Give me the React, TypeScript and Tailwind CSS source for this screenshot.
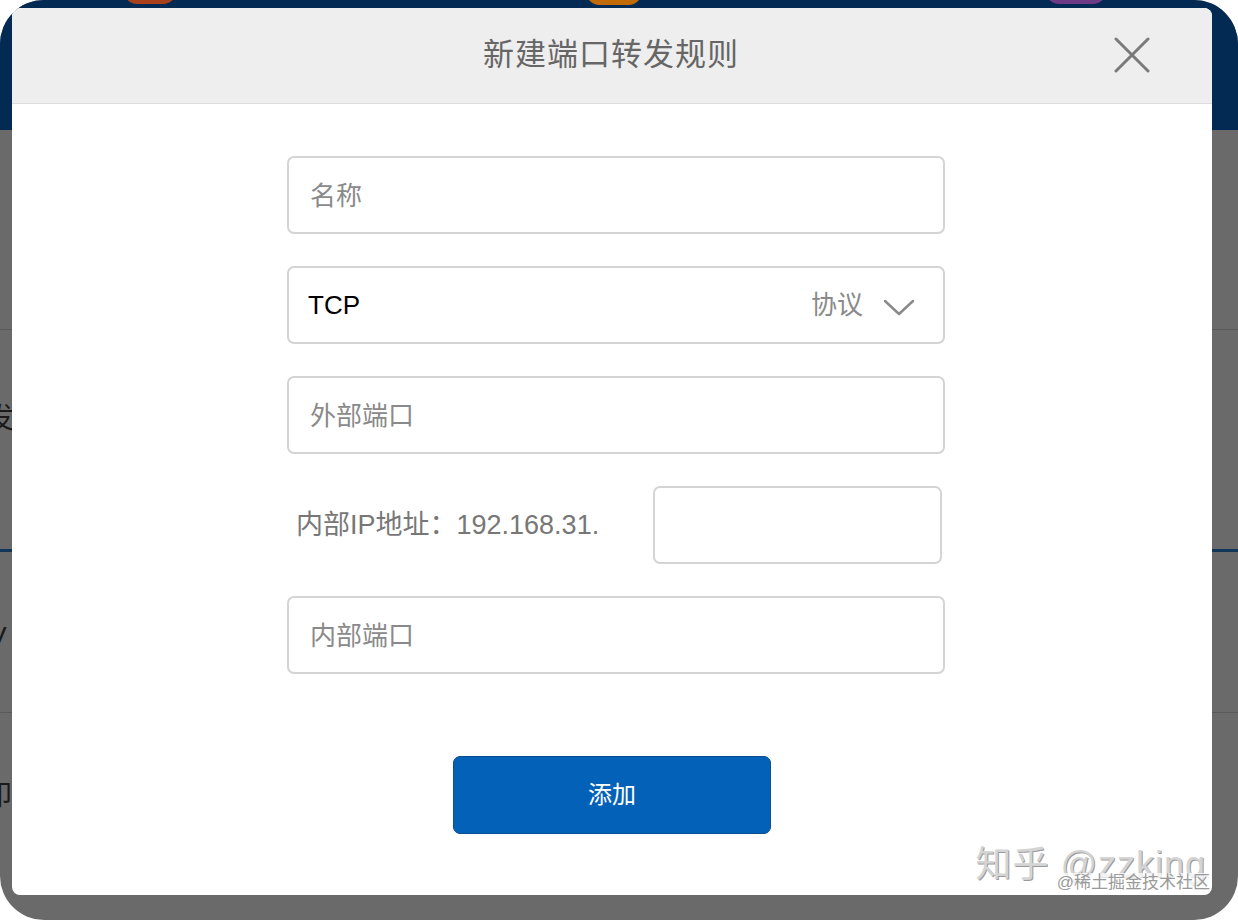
import React from "react";

const font = { fontFamily: '"Liberation Sans", "Noto Sans CJK SC", sans-serif' };

function Field({ placeholder }: { placeholder: string }) {
  return (
    <div className="w-[658px] h-[78px] rounded-[7px] border-2 border-[#d4d4d4] bg-white flex items-center pl-[21px] pt-[2px] text-[26px] text-[#8a8a8a]">
      {placeholder}
    </div>
  );
}

export default function App() {
  return (
    <div className="w-[1238px] h-[920px] bg-white" style={font}>
      <div className="relative w-full h-full rounded-[44px] overflow-hidden bg-[#6a6a6a]">
        {/* background page (dimmed) */}
        <div className="h-[130px] bg-[#022a52] flex items-start">
          <div className="ml-[124px] -mt-[22px] w-[52px] h-[26px] rounded-full bg-[#a8401c]" />
          <div className="ml-[410px] -mt-[22px] w-[56px] h-[27px] rounded-full bg-[#c06a08]" />
          <div className="ml-[404px] -mt-[22px] w-[60px] h-[26px] rounded-full bg-[#6e3a86]" />
        </div>
        <div className="h-[200px] border-b border-[#5a5a5a]" />
        <div className="h-[219px] flex items-start pt-[68px] -ml-[14px] text-[28px] text-[#1a1a1a]">发</div>
        <div className="h-[3px] bg-[#12355a]" />
        <div className="h-[161px] border-b border-[#5a5a5a] flex items-center -ml-[12px] pt-[10px] text-[28px] text-[#1a1a1a]">V</div>
        <div className="h-[160px] flex items-center -ml-[16px] pt-[6px] text-[28px] text-[#1a1a1a]">印</div>

        {/* modal */}
        <div className="absolute left-[12px] top-[8px] w-[1200px] h-[887px] bg-white rounded-[8px] overflow-hidden flex flex-col">
          <div className="h-[96px] bg-[#eeeeee] border-b border-[#dcdcdc] flex items-center justify-center relative shrink-0">
            <span className="text-[31px] text-[#666666] tracking-[1px] ml-[-2px]">新建端口转发规则</span>
            <svg className="absolute left-[1102px] top-[29px]" width="36" height="36" viewBox="0 0 36 36">
              <path d="M2 2 L34 34 M34 2 L2 34" stroke="#7a7a7a" strokeWidth="3" strokeLinecap="round" />
            </svg>
          </div>

          <div className="pl-[275px] pt-[52px] flex flex-col gap-[32px]">
            <Field placeholder="名称" />
            <div className="w-[658px] h-[78px] rounded-[7px] border-2 border-[#d4d4d4] bg-white flex items-center pl-[19px] pr-[28px]">
              <span className="text-[26px] text-black flex-1">TCP</span>
              <span className="text-[26px] text-[#8a8a8a]">协议</span>
              <svg className="ml-[20px] mt-[4px]" width="32" height="18" viewBox="0 0 32 18">
                <path d="M2 3 L16 16 L30 3" fill="none" stroke="#8a8a8a" strokeWidth="2.5" strokeLinecap="round" strokeLinejoin="round" />
              </svg>
            </div>
            <Field placeholder="外部端口" />
            <div className="w-[658px] h-[78px] flex items-center">
              <span className="ml-[9px] text-[27px] text-[#777777] w-[357px]">内部IP地址：192.168.31.</span>
              <div className="w-[289px] h-[78px] rounded-[7px] border-2 border-[#d4d4d4] bg-white" />
            </div>
            <Field placeholder="内部端口" />
          </div>

          <div className="pt-[82px] flex justify-center">
            <div className="w-[318px] h-[78px] rounded-[7px] bg-[#0461b8] border border-[#0b4e92] flex items-center justify-center text-white text-[24px]">
              添加
            </div>
          </div>

          <div className="absolute right-[2px] bottom-[2px] flex flex-col items-end">
            <span className="text-[36px] leading-[40px] text-[#d4d4d4] tracking-[1px] mr-[4px]" style={{ textShadow: "1px 1px 0 #9a9a9a" }}>
              知乎 @zzking
            </span>
            <span className="-mt-[12px] text-[17px] leading-[20px] text-[#9a9a9a] bg-white/70">@稀土掘金技术社区</span>
          </div>
        </div>
      </div>
    </div>
  );
}
